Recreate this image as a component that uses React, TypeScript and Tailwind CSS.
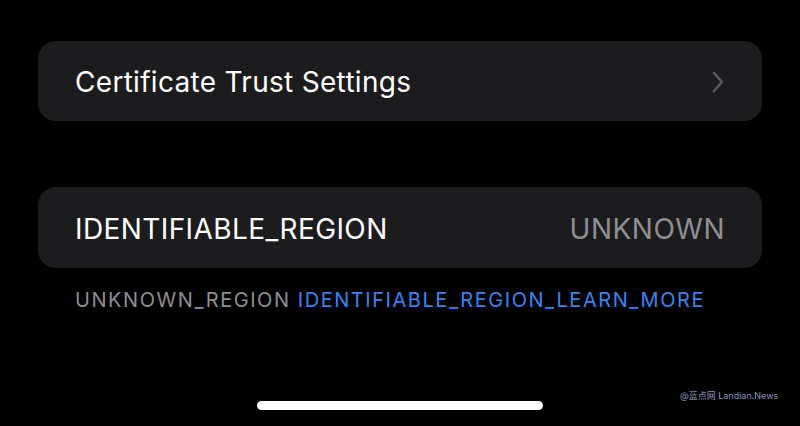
export default function App() {
  return (
    <div
      className="relative w-[800px] h-[426px] bg-black overflow-hidden"
      style={{ fontFamily: "Inter, Roboto, 'Noto Sans CJK SC', sans-serif" }}
    >
      <div className="pt-[41px] px-[38px] flex flex-col">
        {/* Certificate row */}
        <div className="h-[80px] rounded-[18px] bg-[#1c1c1e] flex items-center justify-between pl-[37px] pr-[37px] pt-[2px]">
          <span className="text-white text-[28px] tracking-[0.3px]">Certificate Trust Settings</span>
          <svg width="14" height="24" viewBox="0 0 14 24" fill="none">
            <path d="M3 3l8 9-8 9" stroke="#5a5a5e" strokeWidth="2.6" strokeLinecap="round" strokeLinejoin="round" />
          </svg>
        </div>

        {/* Region row */}
        <div className="mt-[66px] h-[81px] rounded-[18px] bg-[#1c1c1e] flex items-center justify-between pl-[37px] pr-[37px] pt-[2px]">
          <span className="text-white text-[28px] tracking-[0.4px]">IDENTIFIABLE_REGION</span>
          <span className="text-[#8e8e93] text-[28px] tracking-[0.5px]">UNKNOWN</span>
        </div>

        <p className="mt-[17px] pl-[37px] text-[20px] tracking-[1.55px] text-[#8e8e93]">
          UNKNOWN_REGION <span className="text-[#3b82f0]">IDENTIFIABLE_REGION_LEARN_MORE</span>
        </p>
      </div>

      {/* home indicator */}
      <div className="absolute left-[257px] top-[401px] w-[286px] h-[9px] rounded-full bg-white" />

      {/* watermark */}
      <div className="absolute left-[680px] top-[389px] text-[9px] text-[#8a93b8]">
        @蓝点网 Landian.News
      </div>
    </div>
  );
}
